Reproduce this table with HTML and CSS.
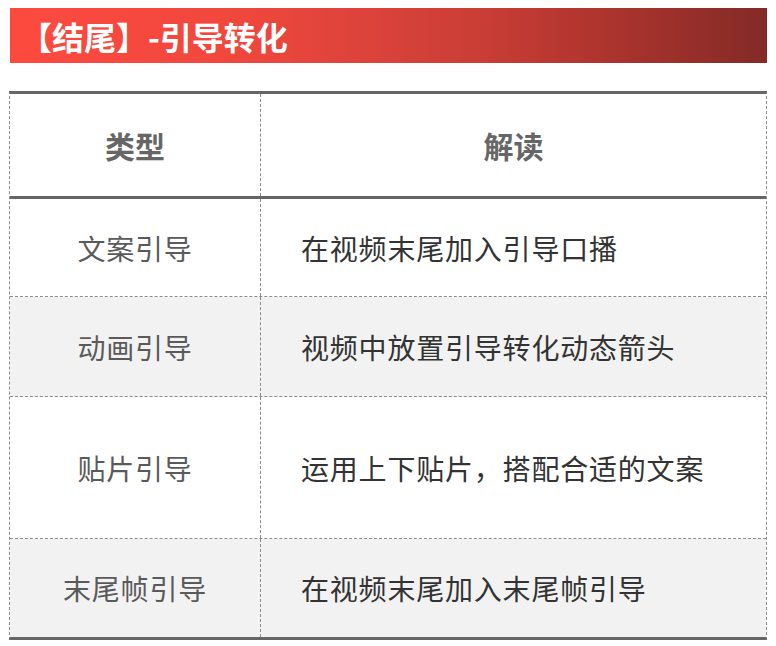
FILE: index.html
```html
<!DOCTYPE html>
<html lang="zh-CN">
<head>
<meta charset="utf-8">
<link rel="stylesheet" href="styles.css">
</head>
<body>
<div class="page">
  <div class="banner"><span class="banner-text">【结尾】-引导转化</span></div>
  <div class="table">
    <div class="row head">
      <div class="cell c1">类型</div>
      <div class="cell c2 center">解读</div>
    </div>
    <div class="row r1">
      <div class="cell c1">文案引导</div>
      <div class="cell c2">在视频末尾加入引导口播</div>
    </div>
    <div class="row r2 alt">
      <div class="cell c1">动画引导</div>
      <div class="cell c2">视频中放置引导转化动态箭头</div>
    </div>
    <div class="row r3">
      <div class="cell c1">贴片引导</div>
      <div class="cell c2">运用上下贴片，搭配合适的文案</div>
    </div>
    <div class="row r4 alt">
      <div class="cell c1">末尾帧引导</div>
      <div class="cell c2">在视频末尾加入末尾帧引导</div>
    </div>
  </div>
</div>
</body>
</html>
```

FILE: styles.css
```css
html, body {
  margin: 0;
  padding: 0;
  background: #ffffff;
}
body {
  font-family: "Noto Sans CJK SC", "Noto Sans", sans-serif;
}
.page {
  padding: 8px 9px 0 9px;
  width: 758px;
}
.banner {
  margin-left: 1px;
  width: 757px;
  height: 55px;
  display: flex;
  align-items: center;
  background: linear-gradient(to right, #fd4a3f 0%, #f0473d 30%, #d8423a 50%, #c53c34 65%, #a7322c 82%, #832a27 100%);
}
.banner-text {
  color: #ffffff;
  font-weight: 700;
  font-size: 32px;
  line-height: 1;
  padding-left: 10px;
}
.table {
  margin-top: 28px;
  border-top: 3px solid #666666;
  border-bottom: 3px solid #666666;
  border-left: 1px dashed #8c8c8c;
  border-right: 1px dashed #8c8c8c;
}
.row {
  display: grid;
  grid-template-columns: 251px 1fr;
  box-sizing: border-box;
  border-bottom: 1px dashed #8c8c8c;
}
.row.alt {
  background: #f2f2f2;
}
.row.head {
  height: 105px;
  border-bottom: 3px solid #666666;
}
.row.r1 { height: 98px; }
.row.r2 { height: 100px; }
.row.r3 { height: 142px; }
.row.r4 { height: 98px; border-bottom: none; }
.cell {
  display: flex;
  align-items: center;
  font-size: 28px;
  letter-spacing: 0.8px;
}
.c1 {
  justify-content: center;
  border-right: 1px dashed #8c8c8c;
  color: #5a5a5a;
}
.c2 {
  padding-left: 40px;
  color: #333333;
}
.c2.center {
  justify-content: center;
  padding-left: 0;
}
.head .cell {
  font-weight: 700;
  font-size: 30px;
  letter-spacing: 0;
  color: #666666;
}
```
